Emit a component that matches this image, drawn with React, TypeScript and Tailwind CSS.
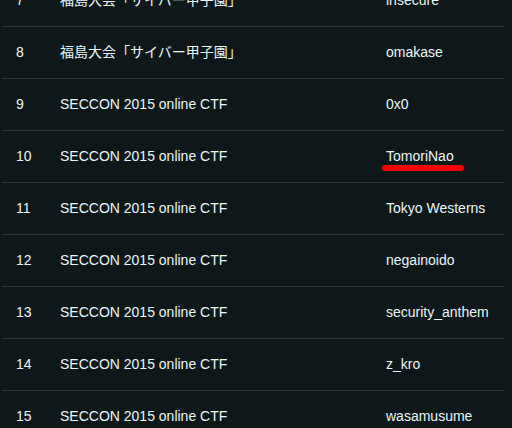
import React from 'react';

interface Row {
  rank: number;
  event: string;
  team: string;
  marked?: boolean;
}

const rows: Row[] = [
  { rank: 7, event: '福島大会「サイバー甲子園」', team: 'insecure' },
  { rank: 8, event: '福島大会「サイバー甲子園」', team: 'omakase' },
  { rank: 9, event: 'SECCON 2015 online CTF', team: '0x0' },
  { rank: 10, event: 'SECCON 2015 online CTF', team: 'TomoriNao', marked: true },
  { rank: 11, event: 'SECCON 2015 online CTF', team: 'Tokyo Westerns' },
  { rank: 12, event: 'SECCON 2015 online CTF', team: 'negainoido' },
  { rank: 13, event: 'SECCON 2015 online CTF', team: 'security_anthem' },
  { rank: 14, event: 'SECCON 2015 online CTF', team: 'z_kro' },
  { rank: 15, event: 'SECCON 2015 online CTF', team: 'wasamusume' },
];

const App: React.FC = () => {
  return (
    <div
      className="h-[428px] w-[512px] overflow-hidden bg-[#0e181b] text-[14px] text-[#eaf6f6]"
      style={{ fontFamily: '"Liberation Sans", Arial, "Noto Sans CJK JP", sans-serif' }}
    >
      {/* scrolled ranking table, row 7 cut at the top */}
      <div className="-mt-[26px] ml-[2px] w-[502px]">
        {rows.map((row, index) => (
          <div
            key={row.rank}
            className={`grid h-[52px] grid-cols-[58px_326px_1fr] items-center ${
              index > 0 ? 'border-t border-[#2b3536]' : ''
            }`}
          >
            <div className="pl-[14px]">{row.rank}</div>
            <div className="whitespace-nowrap">{row.event}</div>
            <div className="relative whitespace-nowrap">
              {row.team}
              {row.marked && (
                <span className="absolute left-[-4px] top-[19px] h-[6px] w-[82px] rounded-full bg-[#f00000]" />
              )}
            </div>
          </div>
        ))}
      </div>
    </div>
  );
};

export default App;
